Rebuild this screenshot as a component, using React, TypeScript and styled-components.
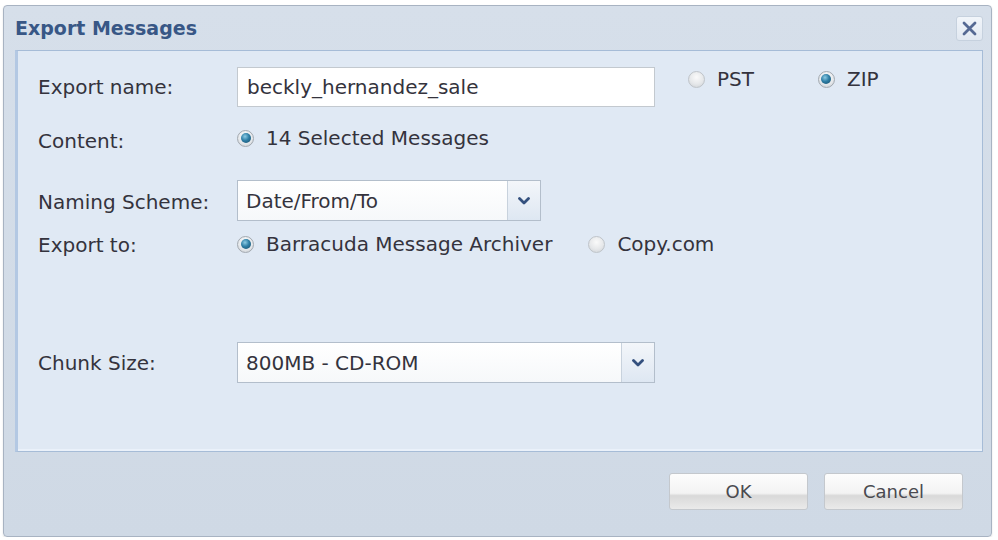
import React, { FC } from 'react'
import styled, { createGlobalStyle } from 'styled-components'

const GlobalStyle = createGlobalStyle`
    body {
        margin: 0;
        padding: 5px 6px 0 3px;
        background: #FFFFFF;
        font-family: "DejaVu Sans", Verdana, sans-serif;
    }
`

const Dialog = styled.div`
    width: 989px;
    height: 532px;
    box-sizing: border-box;
    display: flex;
    flex-direction: column;
    padding: 0 8px 0 11px;
    border: 1px solid #A8B3C2;
    border-radius: 4px;
    background: linear-gradient(#D6DFEA, #CFD9E5);
    box-shadow: 0 1px 2px rgba(0,0,0,0.12);
`

const Header = styled.div`
    height: 44px;
    flex: none;
    display: flex;
    align-items: center;
    justify-content: space-between;
`

const Title = styled.div`
    font-size: 19px;
    font-weight: bold;
    color: #385786;
`

const CloseButton = styled.div`
    width: 27px;
    height: 25px;
    box-sizing: border-box;
    border: 1px solid #C6D1DE;
    border-radius: 3px;
    background: linear-gradient(#F1F5FA, #E1E8F1);
    display: flex;
    align-items: center;
    justify-content: center;
`

const Panel = styled.div`
    height: 402px;
    flex: none;
    box-sizing: border-box;
    border: 1px solid #A6BCD7;
    border-left: 3px solid #B3C8E3;
    background: #E0E9F4;
    box-shadow: inset 0 -2px 0 #EAF1FA;
    padding: 0 0 0 20px;
    display: flex;
    flex-direction: column;
`

const Row = styled.div<{ $top: number; $height: number }>`
    display: grid;
    grid-template-columns: 199px 1fr;
    align-items: center;
    margin-top: ${p => p.$top}px;
    height: ${p => p.$height}px;
`

const Label = styled.div<{ $drop?: number }>`
    font-size: 20px;
    color: #34333D;
    padding-top: ${p => p.$drop ?? 0}px;
`

const Controls = styled.div<{ $gap?: number }>`
    display: flex;
    align-items: center;
    gap: ${p => p.$gap ?? 0}px;
    height: 100%;
`

const TextField = styled.div`
    width: 418px;
    height: 40px;
    box-sizing: border-box;
    border: 1px solid #C3C9CF;
    background: #FFFFFF;
    padding-left: 9px;
    display: flex;
    align-items: center;
    font-size: 20px;
    color: #34333D;
`

// PST / ZIP sit on the top edge of the first row
const FormatGroup = styled.div`
    align-self: flex-start;
    display: flex;
    gap: 64px;
    margin-left: 33px;
    height: 24px;
`

const Option = styled.div`
    display: flex;
    align-items: center;
    gap: 12px;
    font-size: 20px;
    color: #34333D;
    line-height: 24px;
`

const RadioDot = styled.span<{ $checked?: boolean }>`
    width: 17px;
    height: 17px;
    flex: none;
    box-sizing: border-box;
    border-radius: 50%;
    border: 1px solid ${p => p.$checked ? '#A3A9B0' : '#BFC4C9'};
    background: ${p => p.$checked
        ? 'radial-gradient(circle at 50% 35%, #FFFFFF 0%, #E4E7EA 60%, #C4C9CE 100%)'
        : 'radial-gradient(circle at 50% 35%, #FAFAFA 0%, #E6E8EA 55%, #CDD1D5 100%)'};
    display: flex;
    align-items: center;
    justify-content: center;

    &::after {
        content: '';
        width: 10px;
        height: 10px;
        border-radius: 50%;
        display: ${p => p.$checked ? 'block' : 'none'};
        background: radial-gradient(circle at 40% 35%, #8CCBE4 0%, #2F7FA6 45%, #154A66 100%);
    }
`

const Combo = styled.div<{ $width: number }>`
    width: ${p => p.$width}px;
    height: 41px;
    box-sizing: border-box;
    border: 1px solid #B3BECB;
    background: #FFFFFF;
    display: flex;
`

const ComboValue = styled.div`
    flex: 1;
    padding-left: 8px;
    display: flex;
    align-items: center;
    font-size: 20px;
    color: #34333D;
    background: linear-gradient(#FFFFFF, #F6F8FA);
`

const ComboTrigger = styled.div`
    width: 32px;
    flex: none;
    border-left: 1px solid #C8D2DD;
    background: linear-gradient(#F3F6FA, #DEE7F2);
    display: flex;
    align-items: center;
    justify-content: center;
`

const Footer = styled.div`
    flex: 1;
    display: flex;
    justify-content: flex-end;
    align-items: flex-start;
    gap: 16px;
    padding: 21px 20px 0 0;
`

const Button = styled.div`
    width: 139px;
    height: 37px;
    box-sizing: border-box;
    border: 1px solid #C4C8CD;
    border-radius: 3px;
    background: linear-gradient(#FDFDFD 0%, #F3F3F3 55%, #D9D9D9 62%, #EAEAEA 100%);
    display: flex;
    align-items: center;
    justify-content: center;
    font-size: 18px;
    color: #4A4A50;
`

const Chevron: FC = () => (
    <svg width="12" height="8" viewBox="0 0 12 8">
        <polyline points="1.5,1.5 6,6 10.5,1.5" fill="none" stroke="#34507E" strokeWidth="2.8" strokeLinecap="round" strokeLinejoin="round" />
    </svg>
)

const CloseIcon: FC = () => (
    <svg width="15" height="15" viewBox="0 0 15 15">
        <path d="M2 2 L13 13 M13 2 L2 13" stroke="#556993" strokeWidth="2.8" strokeLinecap="round" />
    </svg>
)

const App: FC = () => {
    return (
        <>
            <GlobalStyle />
            <Dialog>
                <Header>
                    <Title>Export Messages</Title>
                    <CloseButton>
                        <CloseIcon />
                    </CloseButton>
                </Header>
                <Panel>
                    <Row $top={16} $height={40}>
                        <Label>Export name:</Label>
                        <Controls>
                            <TextField>beckly_hernandez_sale</TextField>
                            <FormatGroup>
                                <Option><RadioDot />PST</Option>
                                <Option><RadioDot $checked />ZIP</Option>
                            </FormatGroup>
                        </Controls>
                    </Row>
                    <Row $top={16} $height={28}>
                        <Label $drop={6}>Content:</Label>
                        <Controls>
                            <Option><RadioDot $checked />14 Selected Messages</Option>
                        </Controls>
                    </Row>
                    <Row $top={29} $height={41}>
                        <Label $drop={3}>Naming Scheme:</Label>
                        <Controls>
                            <Combo $width={304}>
                                <ComboValue>Date/From/To</ComboValue>
                                <ComboTrigger><Chevron /></ComboTrigger>
                            </Combo>
                        </Controls>
                    </Row>
                    <Row $top={9} $height={28}>
                        <Label $drop={2}>Export to:</Label>
                        <Controls $gap={36}>
                            <Option><RadioDot $checked />Barracuda Message Archiver</Option>
                            <Option><RadioDot />Copy.com</Option>
                        </Controls>
                    </Row>
                    <Row $top={84} $height={41}>
                        <Label>Chunk Size:</Label>
                        <Controls>
                            <Combo $width={418}>
                                <ComboValue>800MB - CD-ROM</ComboValue>
                                <ComboTrigger><Chevron /></ComboTrigger>
                            </Combo>
                        </Controls>
                    </Row>
                </Panel>
                <Footer>
                    <Button>OK</Button>
                    <Button>Cancel</Button>
                </Footer>
            </Dialog>
        </>
    )
}

export default App
